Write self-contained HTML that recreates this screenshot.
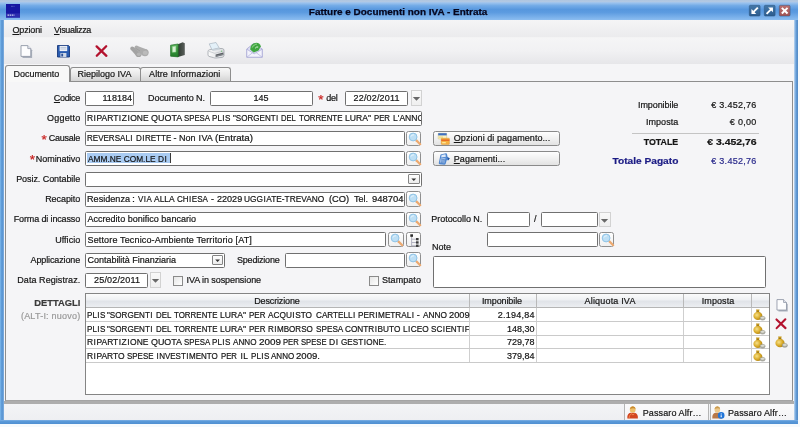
<!DOCTYPE html>
<html><head><meta charset="utf-8"><title>Fatture e Documenti non IVA - Entrata</title>
<style>
*{box-sizing:border-box;margin:0;padding:0}
html,body{width:800px;height:427px;overflow:hidden;background:#f6fafd}
body{will-change:transform;font-family:"Liberation Sans",sans-serif;font-size:9px;color:#151515;position:relative}
.a{position:absolute;white-space:nowrap}
.t{line-height:10px;-webkit-text-stroke:0.2px}
#title{left:0;top:0;width:798px;height:20px;background:linear-gradient(#afc5df 0,#b2c9e4 9%,#9cc3ee 14%,#73abe7 28%,#5797de 48%,#5c9be0 62%,#79b0ea 85%,#8cbdf0 100%)}
#frameL{left:0;top:2px;width:4.8px;height:421px;background:linear-gradient(90deg,#7fbbee 0,#609cd8 28%,#5b95d2 62%,#a4c6ea 84%,#c6daf0 100%)}
#frameR{left:793.8px;top:2px;width:4.4px;height:422px;background:linear-gradient(90deg,#c4dcf2 0,#8cb7e4 25%,#6099d4 60%,#588fca 85%,#4f86bc 100%)}
#frameB{left:0;top:419.7px;width:798px;height:4px;background:linear-gradient(#7fb1e6,#5a99d8 35%,#4f8fd2)}
#menu{left:4px;top:19.5px;width:790px;height:18.5px;background:linear-gradient(#f5f5f6,#ebebed);border-bottom:1px solid #f3f3f4}
#tool{left:4px;top:38px;width:790px;height:25.5px;background:linear-gradient(#f5f5f6,#f1f1f3 50%,#e6e6e9)}
#content{left:4px;top:63.5px;width:790px;height:340px;background:#f5f5f7}
#panel{left:5px;top:81px;width:788px;height:319.8px;border:1px solid #8e8e8e;border-bottom-color:#a4a4a4;background:#f5f5f7}
.tab{border:1px solid #8e8e8e;border-bottom:none;border-radius:3px 3px 0 0;background:linear-gradient(#f8f8f8,#e9e9e9 50%,#d4d4d4)}
.tab.sel{background:#f8f8f8}
.f{border:1px solid #707070;background:#fff;border-radius:1.5px}
.btn{border:1px solid #8a8a8a;border-radius:2.5px;background:linear-gradient(#fefefe,#f1f1f1 50%,#e2e2e2)}
.ib{border:1px solid #8f8f8f;border-radius:2.5px;background:linear-gradient(#fefefe,#f0f0f0)}
.chk{border:1px solid #8a8a8a;background:linear-gradient(135deg,#e6e6e6,#fff)}
.red{color:#c21a1a}
u{text-decoration:underline;text-underline-offset:1px}
#status{left:4px;top:401px;width:790px;height:18.8px;background:linear-gradient(#f3f4f6,#eeeff2);border-top:3.4px solid #adadad}
.hl{background:#a9c8ef}
svg{position:absolute;overflow:visible}
.cb{border:1px solid #858585;border-radius:1px;background:linear-gradient(#fff,#ececec)}
.db{border:1px solid #d2d2d2;background:linear-gradient(#f9f9f9,#efefef)}
i{font-style:normal;padding:0 0.5px}
</style></head><body>
<div class="a" id="frameL"></div><div class="a" id="frameR"></div><div class="a" id="frameB"></div>
<div class="a" id="title"></div>
<div class="a" id="menu"></div><div class="a" id="tool"></div><div class="a" id="content"></div>
<div class="a" id="panel"></div><div class="a" id="status"></div>
<div class="a tab sel" style="left:5px;top:65px;width:65px;height:17px;"></div>
<div class="a tab" style="left:69.5px;top:67px;width:71.0px;height:14px;"></div>
<div class="a tab" style="left:140px;top:67px;width:91px;height:14px;"></div>
<div class="a f" style="left:85px;top:90.5px;width:49px;height:15.0px;"></div>
<div class="a f" style="left:210px;top:90.5px;width:102.5px;height:15.0px;"></div>
<div class="a f" style="left:345px;top:90.5px;width:63.25px;height:15.0px;"></div>
<div class="a db" style="left:410.5px;top:90.0px;width:11.0px;height:15.5px;"><svg style="left:0;top:0" width="11" height="15.5"><path d="M0.80 6.05h7.4l-3.70 3.8z" fill="#686868"/></svg></div>
<div class="a f" style="left:85px;top:110.75px;width:336.5px;height:15.0px;"></div>
<div class="a f" style="left:85px;top:131.0px;width:319.5px;height:15.0px;"></div>
<div class="a ib" style="left:406.1px;top:130.7px;width:15.4px;height:15.3px;"><svg style="left:0.6px;top:0.1px" width="14" height="14" viewBox="0 0 14 14"><line x1="8.4" y1="8.4" x2="12.2" y2="12.2" stroke="#eca970" stroke-width="2.2" stroke-linecap="round"/><circle cx="5.1" cy="5" r="3.9" fill="#bddff5" stroke="#8fc3e6" stroke-width="1"/><path d="M3 4.6A2.6 2.6 0 0 1 6 2.8" stroke="#e8f5fd" stroke-width="1" fill="none"/></svg></div>
<div class="a f" style="left:85px;top:151.25px;width:319.5px;height:15.0px;"></div>
<div class="a ib" style="left:406.1px;top:150.95px;width:15.4px;height:15.3px;"><svg style="left:0.6px;top:0.1px" width="14" height="14" viewBox="0 0 14 14"><line x1="8.4" y1="8.4" x2="12.2" y2="12.2" stroke="#eca970" stroke-width="2.2" stroke-linecap="round"/><circle cx="5.1" cy="5" r="3.9" fill="#bddff5" stroke="#8fc3e6" stroke-width="1"/><path d="M3 4.6A2.6 2.6 0 0 1 6 2.8" stroke="#e8f5fd" stroke-width="1" fill="none"/></svg></div>
<div class="a f" style="left:85px;top:171.5px;width:336.5px;height:15.0px;"></div>
<div class="a cb" style="left:408.2px;top:173.8px;width:11.6px;height:10.5px;"><svg style="left:0;top:0" width="11.6" height="10.5"><path d="M2.40 3.50h4.8l-2.40 2.5z" fill="#333"/></svg></div>
<div class="a f" style="left:85px;top:191.75px;width:319.5px;height:15.0px;"></div>
<div class="a ib" style="left:406.1px;top:191.45px;width:15.4px;height:15.3px;"><svg style="left:0.6px;top:0.1px" width="14" height="14" viewBox="0 0 14 14"><line x1="8.4" y1="8.4" x2="12.2" y2="12.2" stroke="#eca970" stroke-width="2.2" stroke-linecap="round"/><circle cx="5.1" cy="5" r="3.9" fill="#bddff5" stroke="#8fc3e6" stroke-width="1"/><path d="M3 4.6A2.6 2.6 0 0 1 6 2.8" stroke="#e8f5fd" stroke-width="1" fill="none"/></svg></div>
<div class="a f" style="left:85px;top:212.0px;width:319.5px;height:15.0px;"></div>
<div class="a ib" style="left:406.1px;top:211.7px;width:15.4px;height:15.3px;"><svg style="left:0.6px;top:0.1px" width="14" height="14" viewBox="0 0 14 14"><line x1="8.4" y1="8.4" x2="12.2" y2="12.2" stroke="#eca970" stroke-width="2.2" stroke-linecap="round"/><circle cx="5.1" cy="5" r="3.9" fill="#bddff5" stroke="#8fc3e6" stroke-width="1"/><path d="M3 4.6A2.6 2.6 0 0 1 6 2.8" stroke="#e8f5fd" stroke-width="1" fill="none"/></svg></div>
<div class="a f" style="left:85px;top:232.25px;width:301.25px;height:15.0px;"></div>
<div class="a ib" style="left:388.3px;top:231.95px;width:15.45px;height:15.3px;"><svg style="left:0.6px;top:0.1px" width="14" height="14" viewBox="0 0 14 14"><line x1="8.4" y1="8.4" x2="12.2" y2="12.2" stroke="#eca970" stroke-width="2.2" stroke-linecap="round"/><circle cx="5.1" cy="5" r="3.9" fill="#bddff5" stroke="#8fc3e6" stroke-width="1"/><path d="M3 4.6A2.6 2.6 0 0 1 6 2.8" stroke="#e8f5fd" stroke-width="1" fill="none"/></svg></div>
<div class="a ib" style="left:406.1px;top:231.95px;width:15.4px;height:15.3px;"><svg style="left:0;top:0" width="15" height="15" viewBox="0 0 15 15"><path d="M4.6 3v10.2M4.6 6.2h5M4.6 9.5h5M4.6 12.8h5" stroke="#b4b4c2" stroke-width="1" fill="none"/><rect x="3.3" y="1.3" width="2.7" height="2.5" fill="#2d2d2d"/><rect x="9" y="5" width="2.6" height="2.3" fill="#3a3a3a"/><rect x="9" y="8.3" width="2.6" height="2.3" fill="#3a3a3a"/><rect x="9" y="11.6" width="2.6" height="2.3" fill="#3a3a3a"/></svg></div>
<div class="a f" style="left:85px;top:252.5px;width:140px;height:15.0px;"></div>
<div class="a cb" style="left:212.2px;top:254.8px;width:11.2px;height:10.5px;"><svg style="left:0;top:0" width="11.2" height="10.5"><path d="M2.20 3.50h4.8l-2.40 2.5z" fill="#333"/></svg></div>
<div class="a f" style="left:85px;top:272.75px;width:62.5px;height:15.0px;"></div>
<div class="a " style="left:87.2px;top:153.2px;width:83.0px;height:10.2px;background:#a9cbf2"></div>
<div class="a " style="left:170.2px;top:153.2px;width:1.0px;height:10.2px;background:#3a3a3a"></div>
<div class="a db" style="left:149.5px;top:272.25px;width:11.0px;height:15.5px;"><svg style="left:0;top:0" width="11" height="15.5"><path d="M0.80 6.05h7.4l-3.70 3.8z" fill="#686868"/></svg></div>
<div class="a chk" style="left:173px;top:275.5px;width:10px;height:10.0px;"></div>
<div class="a chk" style="left:368.5px;top:275.5px;width:10.0px;height:10.0px;"></div>
<div class="a f" style="left:284.5px;top:252.5px;width:120.0px;height:15.0px;"></div>
<div class="a ib" style="left:406.1px;top:252.2px;width:15.4px;height:15.3px;"><svg style="left:0.6px;top:0.1px" width="14" height="14" viewBox="0 0 14 14"><line x1="8.4" y1="8.4" x2="12.2" y2="12.2" stroke="#eca970" stroke-width="2.2" stroke-linecap="round"/><circle cx="5.1" cy="5" r="3.9" fill="#bddff5" stroke="#8fc3e6" stroke-width="1"/><path d="M3 4.6A2.6 2.6 0 0 1 6 2.8" stroke="#e8f5fd" stroke-width="1" fill="none"/></svg></div>
<div class="a f" style="left:487px;top:212.0px;width:42.5px;height:15.0px;"></div>
<div class="a f" style="left:541px;top:212.0px;width:57px;height:15.0px;"></div>
<div class="a db" style="left:599.25px;top:211.5px;width:11.25px;height:15.5px;"><svg style="left:0;top:0" width="11" height="15.5"><path d="M0.80 6.05h7.4l-3.70 3.8z" fill="#686868"/></svg></div>
<div class="a f" style="left:487px;top:232.25px;width:110.5px;height:15.0px;"></div>
<div class="a ib" style="left:599.25px;top:231.95px;width:14.75px;height:15.3px;"><svg style="left:0.6px;top:0.1px" width="14" height="14" viewBox="0 0 14 14"><line x1="8.4" y1="8.4" x2="12.2" y2="12.2" stroke="#eca970" stroke-width="2.2" stroke-linecap="round"/><circle cx="5.1" cy="5" r="3.9" fill="#bddff5" stroke="#8fc3e6" stroke-width="1"/><path d="M3 4.6A2.6 2.6 0 0 1 6 2.8" stroke="#e8f5fd" stroke-width="1" fill="none"/></svg></div>
<div class="a f" style="left:433px;top:256px;width:333px;height:31.5px;"></div>
<div class="a btn" style="left:433px;top:130.75px;width:126.5px;height:15.5px;"></div>
<div class="a btn" style="left:433px;top:151.25px;width:126.5px;height:15.0px;"></div>
<div class="a " style="left:632px;top:133px;width:127px;height:1px;background:#c4c4c4"></div>
<div class="a f" style="left:85px;top:293.2px;width:684.5px;height:102.3px;border-color:#848484;border-radius:0"></div>
<div class="a " style="left:86px;top:294.2px;width:682.5px;height:14.0px;background:linear-gradient(#fbfbfb,#eef0f3 45%,#e0e3e8 55%,#eceef1);border-bottom:1px solid #b5b5b5"></div>
<div class="a " style="left:468.75px;top:294.2px;width:1.0px;height:13.8px;background:#b9b9b9"></div>
<div class="a " style="left:468.75px;top:308px;width:1.0px;height:54.5px;background:#cfcfcf"></div>
<div class="a " style="left:536.0px;top:294.2px;width:1.0px;height:13.8px;background:#b9b9b9"></div>
<div class="a " style="left:536.0px;top:308px;width:1.0px;height:54.5px;background:#cfcfcf"></div>
<div class="a " style="left:683.25px;top:294.2px;width:1.0px;height:13.8px;background:#b9b9b9"></div>
<div class="a " style="left:683.25px;top:308px;width:1.0px;height:54.5px;background:#cfcfcf"></div>
<div class="a " style="left:751.4px;top:294.2px;width:1.0px;height:13.8px;background:#b9b9b9"></div>
<div class="a " style="left:751.4px;top:308px;width:1.0px;height:54.5px;background:#cfcfcf"></div>
<div class="a " style="left:86px;top:321.28px;width:682.5px;height:1.0px;background:#cacaca"></div>
<div class="a " style="left:86px;top:334.86px;width:682.5px;height:1.0px;background:#cacaca"></div>
<div class="a " style="left:86px;top:348.44px;width:682.5px;height:1.0px;background:#cacaca"></div>
<div class="a " style="left:86px;top:362.02px;width:682.5px;height:1.0px;background:#cacaca"></div>
<div class="a " style="left:624px;top:404.4px;width:84.5px;height:15.4px;background:linear-gradient(#fafafb,#f3f3f5);border-left:1px solid #b4b4b4;border-right:1px solid #b4b4b4"></div>
<div class="a " style="left:710px;top:404.4px;width:84px;height:15.4px;background:linear-gradient(#fafafb,#f3f3f5);border-left:1px solid #b4b4b4"></div>
<div class="a t" style="top:6.77px;font-size:9.6px;left:247.60000000000002px;width:300px;text-align:center;font-weight:bold;color:#06061e;-webkit-text-stroke:0.25px #06061e"><span style="display:inline-block;transform:scaleX(1.0368);transform-origin:center center">Fatture e Documenti non IVA - Entrata</span></div>
<div class="a t" style="top:25.18px;font-size:9.0px;letter-spacing:-0.133px;left:12.4px;"><span><u>O</u>pzioni</span></div>
<div class="a t" style="top:25.18px;font-size:9.0px;letter-spacing:-0.336px;left:54px;"><span><u>V</u>isualizza</span></div>
<div class="a t" style="top:69.38px;font-size:9.0px;letter-spacing:-0.037px;left:-113.6px;width:300px;text-align:center;text-indent:-0.037px;"><span>Documento</span></div>
<div class="a t" style="top:69.38px;font-size:9.0px;letter-spacing:0.010px;left:-45.599999999999994px;width:300px;text-align:center;text-indent:0.010px;"><span>Riepilogo IVA</span></div>
<div class="a t" style="top:69.38px;font-size:9.0px;letter-spacing:0.070px;left:34.69999999999999px;width:300px;text-align:center;text-indent:0.070px;"><span>Altre Informazioni</span></div>
<div class="a t" style="top:92.98px;font-size:9.0px;letter-spacing:-0.336px;right:719.80px;margin-right:0.336px;"><span><u>C</u>odice</span></div>
<div class="a t" style="top:92.98px;font-size:9.0px;letter-spacing:0.021px;right:668.00px;margin-right:-0.021px;"><span>118184</span></div>
<div class="a t" style="top:92.98px;font-size:9.0px;letter-spacing:-0.044px;left:148px;"><span>Documento N.</span></div>
<div class="a t" style="top:92.98px;font-size:9.0px;left:111px;width:300px;text-align:center;"><span>145</span></div>
<div class="a t" style="top:94.52px;font-size:13.5px;left:318.29999999999995px;color:#c8201e"><span>*</span></div>
<div class="a t" style="top:92.98px;font-size:9.0px;letter-spacing:-0.239px;left:326.2px;"><span>del</span></div>
<div class="a t" style="top:92.98px;font-size:9.0px;letter-spacing:0.161px;left:226.5px;width:300px;text-align:center;text-indent:0.161px;"><span>22/02/2011</span></div>
<div class="a t" style="top:113.23px;font-size:9.0px;letter-spacing:0.181px;right:719.80px;margin-right:-0.181px;"><span>Oggetto</span></div>
<div class="a t" style="top:113.23px;font-size:9.0px;left:86.8px;word-spacing:0px;"><span style="display:inline-block;transform:scaleX(0.9456);transform-origin:left center">R<i>I</i>PART<i>I</i>Z<i>I</i>ONE</span></div>
<div class="a t" style="top:113.23px;font-size:9.0px;left:150.60000000000002px;word-spacing:0px;"><span style="display:inline-block;transform:scaleX(0.9954);transform-origin:left center">QUOTA</span></div>
<div class="a t" style="top:113.23px;font-size:9.0px;left:183.70000000000002px;word-spacing:0px;"><span style="display:inline-block;transform:scaleX(0.8662);transform-origin:left center">SPESA</span></div>
<div class="a t" style="top:113.23px;font-size:9.0px;left:211.8px;word-spacing:0px;"><span style="display:inline-block;transform:scaleX(0.9004);transform-origin:left center">PL<i>I</i>S</span></div>
<div class="a t" style="top:113.23px;font-size:9.0px;left:232.5px;word-spacing:0px;"><span style="display:inline-block;transform:scaleX(0.8942);transform-origin:left center">"SORGENT<i>I</i></span></div>
<div class="a t" style="top:113.23px;font-size:9.0px;left:281.0px;word-spacing:0px;"><span style="display:inline-block;transform:scaleX(0.8450);transform-origin:left center">DEL</span></div>
<div class="a t" style="top:113.23px;font-size:9.0px;left:298.5px;word-spacing:0px;"><span style="display:inline-block;transform:scaleX(0.8816);transform-origin:left center">TORRENTE</span></div>
<div class="a t" style="top:113.23px;font-size:9.0px;left:344.8px;word-spacing:0px;"><span style="display:inline-block;transform:scaleX(0.9558);transform-origin:left center">LURA"</span></div>
<div class="a t" style="top:113.23px;font-size:9.0px;left:374.3px;word-spacing:0px;"><span style="display:inline-block;transform:scaleX(0.8641);transform-origin:left center">PER</span></div>
<div class="a t" style="top:113.23px;font-size:9.0px;left:392.5px;word-spacing:0px;width:28.0px;overflow:hidden;"><span style="display:inline-block;transform:scaleX(0.9520);transform-origin:left center">L'ANNO 2009</span></div>
<div class="a t" style="top:135.02px;font-size:13.5px;left:41.5px;color:#c8201e"><span>*</span></div>
<div class="a t" style="top:133.48px;font-size:9.0px;letter-spacing:-0.247px;right:719.80px;margin-right:0.247px;"><span>Causale</span></div>
<div class="a t" style="top:133.48px;font-size:9.0px;left:86.8px;word-spacing:0px;"><span style="display:inline-block;transform:scaleX(0.8924);transform-origin:left center">REVERSAL<i>I</i></span></div>
<div class="a t" style="top:133.48px;font-size:9.0px;left:135.5px;word-spacing:0px;"><span style="display:inline-block;transform:scaleX(0.8930);transform-origin:left center">D<i>I</i>RETTE</span></div>
<div class="a t" style="top:133.48px;font-size:9.0px;left:173.39999999999998px;"><span>-</span></div>
<div class="a t" style="top:133.48px;font-size:9.0px;left:179.3px;word-spacing:0px;"><span style="display:inline-block;transform:scaleX(0.9991);transform-origin:left center">Non</span></div>
<div class="a t" style="top:133.48px;font-size:9.0px;left:198.0px;word-spacing:0px;"><span style="display:inline-block;transform:scaleX(0.9960);transform-origin:left center"><i>I</i>VA</span></div>
<div class="a t" style="top:133.48px;font-size:9.0px;left:214.8px;word-spacing:0px;"><span style="display:inline-block;transform:scaleX(1.0852);transform-origin:left center">(Entrata)</span></div>
<div class="a t" style="top:155.22px;font-size:13.5px;left:29.799999999999997px;color:#c8201e"><span>*</span></div>
<div class="a t" style="top:153.73px;font-size:9.0px;letter-spacing:-0.073px;right:719.80px;margin-right:0.073px;"><span>Nominativo</span></div>
<div class="a t" style="top:173.98px;font-size:9.0px;letter-spacing:-0.065px;right:719.80px;margin-right:0.065px;"><span>Posiz. Contabile</span></div>
<div class="a t" style="top:194.23px;font-size:9.0px;letter-spacing:-0.066px;right:719.80px;margin-right:0.066px;"><span>Recapito</span></div>
<div class="a t" style="top:214.48px;font-size:9.0px;letter-spacing:-0.139px;right:719.80px;margin-right:0.139px;"><span>Forma di incasso</span></div>
<div class="a t" style="top:234.73px;font-size:9.0px;letter-spacing:0.022px;right:719.80px;margin-right:-0.022px;"><span>Ufficio</span></div>
<div class="a t" style="top:254.98px;font-size:9.0px;letter-spacing:-0.129px;right:719.80px;margin-right:0.129px;"><span>Applicazione</span></div>
<div class="a t" style="top:275.23px;font-size:9.0px;letter-spacing:0.065px;right:719.80px;margin-right:-0.065px;"><span>Data Registraz.</span></div>
<div class="a t" style="top:153.73px;font-size:9.0px;left:87.8px;word-spacing:0px;"><span style="display:inline-block;transform:scaleX(0.9260);transform-origin:left center">AMM.NE COM.LE D<i>I</i></span></div>
<div class="a t" style="top:194.23px;font-size:9.0px;left:87.3px;word-spacing:0px;"><span style="display:inline-block;transform:scaleX(1.0110);transform-origin:left center">Residenza</span></div>
<div class="a t" style="top:194.23px;font-size:9.0px;left:132.3px;word-spacing:0px;"><span style="display:inline-block;transform:scaleX(1.1925);transform-origin:left center">:</span></div>
<div class="a t" style="top:194.23px;font-size:9.0px;left:137.5px;word-spacing:0px;"><span style="display:inline-block;transform:scaleX(0.8876);transform-origin:left center">V<i>I</i>A</span></div>
<div class="a t" style="top:194.23px;font-size:9.0px;left:153.8px;word-spacing:0px;"><span style="display:inline-block;transform:scaleX(0.9396);transform-origin:left center">ALLA</span></div>
<div class="a t" style="top:194.23px;font-size:9.0px;left:177.3px;word-spacing:0px;"><span style="display:inline-block;transform:scaleX(0.8977);transform-origin:left center">CH<i>I</i>ESA</span></div>
<div class="a t" style="top:194.23px;font-size:9.0px;left:210.89999999999998px;"><span>-</span></div>
<div class="a t" style="top:194.23px;font-size:9.0px;left:216.8px;word-spacing:0px;"><span style="display:inline-block;transform:scaleX(1.0067);transform-origin:left center">22029</span></div>
<div class="a t" style="top:194.23px;font-size:9.0px;left:244.3px;word-spacing:0px;"><span style="display:inline-block;transform:scaleX(0.9250);transform-origin:left center">UGG<i>I</i>ATE-TREVANO</span></div>
<div class="a t" style="top:194.23px;font-size:9.0px;left:329.3px;word-spacing:0px;"><span style="display:inline-block;transform:scaleX(1.0359);transform-origin:left center">(CO)</span></div>
<div class="a t" style="top:194.23px;font-size:9.0px;left:354.3px;word-spacing:0px;"><span style="display:inline-block;transform:scaleX(0.9989);transform-origin:left center">Tel.</span></div>
<div class="a t" style="top:194.23px;font-size:9.0px;left:371.8px;word-spacing:0px;"><span style="display:inline-block;transform:scaleX(1.0484);transform-origin:left center">948704</span></div>
<div class="a t" style="top:214.48px;font-size:9.0px;letter-spacing:0.016px;left:87.5px;"><span>Accredito bonifico bancario</span></div>
<div class="a t" style="top:234.73px;font-size:9.0px;letter-spacing:0.148px;left:87.5px;"><span>Settore Tecnico-Ambiente Territorio [AT]</span></div>
<div class="a t" style="top:254.98px;font-size:9.0px;letter-spacing:-0.024px;left:87.5px;"><span>Contabilità Finanziaria</span></div>
<div class="a t" style="top:275.23px;font-size:9.0px;letter-spacing:0.161px;left:-33px;width:300px;text-align:center;text-indent:0.161px;"><span>25/02/2011</span></div>
<div class="a t" style="top:275.23px;font-size:9.0px;letter-spacing:-0.077px;left:186.5px;"><span>IVA in sospensione</span></div>
<div class="a t" style="top:275.23px;font-size:9.0px;letter-spacing:0.059px;left:382px;"><span>Stampato</span></div>
<div class="a t" style="top:254.98px;font-size:9.0px;letter-spacing:-0.205px;left:237px;"><span>Spedizione</span></div>
<div class="a t" style="top:214.48px;font-size:9.0px;letter-spacing:-0.041px;left:431.3px;"><span>Protocollo N.</span></div>
<div class="a t" style="top:214.48px;font-size:9.0px;left:534px;"><span>/</span></div>
<div class="a t" style="top:242.28px;font-size:9.0px;letter-spacing:-0.004px;left:432px;"><span>Note</span></div>
<div class="a t" style="top:133.48px;font-size:9.0px;letter-spacing:0.062px;left:453.75px;"><span><u>O</u>pzioni di pagamento...</span></div>
<div class="a t" style="top:153.73px;font-size:9.0px;letter-spacing:0.079px;left:453.75px;"><span><u>P</u>agamenti...</span></div>
<div class="a t" style="top:99.88px;font-size:9.0px;letter-spacing:-0.073px;right:121.70px;margin-right:0.073px;"><span>Imponibile</span></div>
<div class="a t" style="top:99.88px;font-size:9.0px;letter-spacing:0.275px;right:43.70px;margin-right:-0.275px;"><span>€ 3.452,76</span></div>
<div class="a t" style="top:116.88px;font-size:9.0px;letter-spacing:0.069px;right:121.70px;margin-right:-0.069px;"><span>Imposta</span></div>
<div class="a t" style="top:116.88px;font-size:9.0px;letter-spacing:0.295px;right:43.70px;margin-right:-0.295px;"><span>€ 0,00</span></div>
<div class="a t" style="top:136.88px;font-size:9.0px;right:121.70px;font-weight:bold"><span style="display:inline-block;transform:scaleX(0.9809);transform-origin:right center">TOTALE</span></div>
<div class="a t" style="top:136.88px;font-size:9.0px;right:43.70px;font-weight:bold"><span style="display:inline-block;transform:scaleX(1.1587);transform-origin:right center">€ 3.452,76</span></div>
<div class="a t" style="top:155.68px;font-size:9.0px;right:121.70px;font-weight:bold;color:#1b1b84"><span style="display:inline-block;transform:scaleX(1.1278);transform-origin:right center">Totale Pagato</span></div>
<div class="a t" style="top:155.68px;font-size:9.0px;letter-spacing:0.275px;right:43.70px;margin-right:-0.275px;color:#2a2a8c"><span>€ 3.452,76</span></div>
<div class="a t" style="top:297.68px;font-size:9.0px;right:719.80px;font-weight:bold;color:#3a3a3a"><span style="display:inline-block;transform:scaleX(1.0377);transform-origin:right center">DETTAGLI</span></div>
<div class="a t" style="top:311.38px;font-size:9.0px;letter-spacing:0.224px;right:719.80px;margin-right:-0.224px;color:#9a9a9a"><span>(ALT-I: nuovo)</span></div>
<div class="a t" style="top:296.38px;font-size:9.0px;letter-spacing:-0.139px;left:127px;width:300px;text-align:center;text-indent:-0.139px;"><span>Descrizione</span></div>
<div class="a t" style="top:296.38px;font-size:9.0px;letter-spacing:-0.103px;left:352px;width:300px;text-align:center;text-indent:-0.103px;"><span>Imponibile</span></div>
<div class="a t" style="top:296.38px;font-size:9.0px;letter-spacing:0.177px;left:460px;width:300px;text-align:center;text-indent:0.177px;"><span>Aliquota IVA</span></div>
<div class="a t" style="top:296.38px;font-size:9.0px;letter-spacing:0.069px;left:568px;width:300px;text-align:center;text-indent:0.069px;"><span>Imposta</span></div>
<div class="a t" style="top:310.18px;font-size:9.0px;left:86.8px;word-spacing:0px;"><span style="display:inline-block;transform:scaleX(0.9004);transform-origin:left center">PL<i>I</i>S</span></div>
<div class="a t" style="top:310.18px;font-size:9.0px;left:106.8px;word-spacing:0px;"><span style="display:inline-block;transform:scaleX(0.8981);transform-origin:left center">"SORGENT<i>I</i></span></div>
<div class="a t" style="top:310.18px;font-size:9.0px;left:155.5px;word-spacing:0px;"><span style="display:inline-block;transform:scaleX(0.8735);transform-origin:left center">DEL</span></div>
<div class="a t" style="top:310.18px;font-size:9.0px;left:173.5px;word-spacing:0px;"><span style="display:inline-block;transform:scaleX(0.8816);transform-origin:left center">TORRENTE</span></div>
<div class="a t" style="top:310.18px;font-size:9.0px;left:219.8px;word-spacing:0px;"><span style="display:inline-block;transform:scaleX(0.9558);transform-origin:left center">LURA"</span></div>
<div class="a t" style="top:310.18px;font-size:9.0px;left:249.3px;word-spacing:0px;"><span style="display:inline-block;transform:scaleX(0.8911);transform-origin:left center">PER</span></div>
<div class="a t" style="top:310.18px;font-size:9.0px;left:268.0px;word-spacing:0px;"><span style="display:inline-block;transform:scaleX(0.9191);transform-origin:left center">ACQU<i>I</i>STO</span></div>
<div class="a t" style="top:310.18px;font-size:9.0px;left:315.5px;word-spacing:0px;"><span style="display:inline-block;transform:scaleX(0.9071);transform-origin:left center">CARTELL<i>I</i></span></div>
<div class="a t" style="top:310.18px;font-size:9.0px;left:357.5px;word-spacing:0px;"><span style="display:inline-block;transform:scaleX(0.9104);transform-origin:left center">PER<i>I</i>METRAL<i>I</i></span></div>
<div class="a t" style="top:310.18px;font-size:9.0px;left:416.7px;"><span>-</span></div>
<div class="a t" style="top:310.18px;font-size:9.0px;left:422.5px;word-spacing:0px;"><span style="display:inline-block;transform:scaleX(0.9225);transform-origin:left center">ANNO</span></div>
<div class="a t" style="top:310.18px;font-size:9.0px;left:448.8px;word-spacing:0px;"><span style="display:inline-block;transform:scaleX(1.0334);transform-origin:left center">2009</span></div>
<div class="a t" style="top:310.18px;font-size:9.0px;letter-spacing:0.244px;right:265.50px;margin-right:-0.244px;"><span>2.194,84</span></div>
<div class="a t" style="top:323.80px;font-size:9.0px;left:86.8px;word-spacing:0px;"><span style="display:inline-block;transform:scaleX(0.9004);transform-origin:left center">PL<i>I</i>S</span></div>
<div class="a t" style="top:323.80px;font-size:9.0px;left:106.8px;word-spacing:0px;"><span style="display:inline-block;transform:scaleX(0.8981);transform-origin:left center">"SORGENT<i>I</i></span></div>
<div class="a t" style="top:323.80px;font-size:9.0px;left:155.5px;word-spacing:0px;"><span style="display:inline-block;transform:scaleX(0.8735);transform-origin:left center">DEL</span></div>
<div class="a t" style="top:323.80px;font-size:9.0px;left:173.5px;word-spacing:0px;"><span style="display:inline-block;transform:scaleX(0.8816);transform-origin:left center">TORRENTE</span></div>
<div class="a t" style="top:323.80px;font-size:9.0px;left:219.8px;word-spacing:0px;"><span style="display:inline-block;transform:scaleX(0.9558);transform-origin:left center">LURA"</span></div>
<div class="a t" style="top:323.80px;font-size:9.0px;left:249.3px;word-spacing:0px;"><span style="display:inline-block;transform:scaleX(0.8911);transform-origin:left center">PER</span></div>
<div class="a t" style="top:323.80px;font-size:9.0px;left:268.0px;word-spacing:0px;"><span style="display:inline-block;transform:scaleX(0.8954);transform-origin:left center">R<i>I</i>MBORSO</span></div>
<div class="a t" style="top:323.80px;font-size:9.0px;left:315.5px;word-spacing:0px;"><span style="display:inline-block;transform:scaleX(0.9095);transform-origin:left center">SPESA</span></div>
<div class="a t" style="top:323.80px;font-size:9.0px;left:345.0px;word-spacing:0px;"><span style="display:inline-block;transform:scaleX(0.9162);transform-origin:left center">CONTR<i>I</i>BUTO</span></div>
<div class="a t" style="top:323.80px;font-size:9.0px;left:402.5px;word-spacing:0px;"><span style="display:inline-block;transform:scaleX(0.9199);transform-origin:left center">L<i>I</i>CEO</span></div>
<div class="a t" style="top:323.80px;font-size:9.0px;left:430.5px;word-spacing:0px;width:38.2px;overflow:hidden;"><span style="display:inline-block;transform:scaleX(0.9013);transform-origin:left center">SC<i>I</i>ENT<i>I</i>F<i>I</i>CO</span></div>
<div class="a t" style="top:323.80px;font-size:9.0px;letter-spacing:-0.005px;right:265.50px;margin-right:0.005px;"><span>148,30</span></div>
<div class="a t" style="top:337.42px;font-size:9.0px;left:86.8px;word-spacing:0px;"><span style="display:inline-block;transform:scaleX(0.9425);transform-origin:left center">R<i>I</i>PART<i>I</i>Z<i>I</i>ONE</span></div>
<div class="a t" style="top:337.42px;font-size:9.0px;left:150.5px;word-spacing:0px;"><span style="display:inline-block;transform:scaleX(0.9890);transform-origin:left center">QUOTA</span></div>
<div class="a t" style="top:337.42px;font-size:9.0px;left:183.8px;word-spacing:0px;"><span style="display:inline-block;transform:scaleX(0.8729);transform-origin:left center">SPESA</span></div>
<div class="a t" style="top:337.42px;font-size:9.0px;left:212.3px;word-spacing:0px;"><span style="display:inline-block;transform:scaleX(0.9004);transform-origin:left center">PL<i>I</i>S</span></div>
<div class="a t" style="top:337.42px;font-size:9.0px;left:233.0px;word-spacing:0px;"><span style="display:inline-block;transform:scaleX(0.9033);transform-origin:left center">ANNO</span></div>
<div class="a t" style="top:337.42px;font-size:9.0px;left:258.8px;word-spacing:0px;"><span style="display:inline-block;transform:scaleX(1.0983);transform-origin:left center">2009</span></div>
<div class="a t" style="top:337.42px;font-size:9.0px;left:283.0px;word-spacing:0px;"><span style="display:inline-block;transform:scaleX(0.8533);transform-origin:left center">PER</span></div>
<div class="a t" style="top:337.42px;font-size:9.0px;left:301.0px;word-spacing:0px;"><span style="display:inline-block;transform:scaleX(0.8496);transform-origin:left center">SPESE</span></div>
<div class="a t" style="top:337.42px;font-size:9.0px;left:328.8px;word-spacing:0px;"><span style="display:inline-block;transform:scaleX(0.9485);transform-origin:left center">D<i>I</i></span></div>
<div class="a t" style="top:337.42px;font-size:9.0px;left:340.5px;word-spacing:0px;"><span style="display:inline-block;transform:scaleX(0.9052);transform-origin:left center">GEST<i>I</i>ONE.</span></div>
<div class="a t" style="top:337.42px;font-size:9.0px;letter-spacing:-0.005px;right:265.50px;margin-right:0.005px;"><span>729,78</span></div>
<div class="a t" style="top:351.04px;font-size:9.0px;left:86.8px;word-spacing:0px;"><span style="display:inline-block;transform:scaleX(0.9418);transform-origin:left center">R<i>I</i>PARTO</span></div>
<div class="a t" style="top:351.04px;font-size:9.0px;left:126.8px;word-spacing:0px;"><span style="display:inline-block;transform:scaleX(0.8829);transform-origin:left center">SPESE</span></div>
<div class="a t" style="top:351.04px;font-size:9.0px;left:156.0px;word-spacing:0px;"><span style="display:inline-block;transform:scaleX(0.8906);transform-origin:left center"><i>I</i>NVEST<i>I</i>MENTO</span></div>
<div class="a t" style="top:351.04px;font-size:9.0px;left:220.5px;word-spacing:0px;"><span style="display:inline-block;transform:scaleX(0.8641);transform-origin:left center">PER</span></div>
<div class="a t" style="top:351.04px;font-size:9.0px;left:239.8px;word-spacing:0px;"><span style="display:inline-block;transform:scaleX(0.9377);transform-origin:left center"><i>I</i>L</span></div>
<div class="a t" style="top:351.04px;font-size:9.0px;left:250.5px;word-spacing:0px;"><span style="display:inline-block;transform:scaleX(0.9004);transform-origin:left center">PL<i>I</i>S</span></div>
<div class="a t" style="top:351.04px;font-size:9.0px;left:271.3px;word-spacing:0px;"><span style="display:inline-block;transform:scaleX(0.8918);transform-origin:left center">ANNO</span></div>
<div class="a t" style="top:351.04px;font-size:9.0px;left:296.3px;word-spacing:0px;"><span style="display:inline-block;transform:scaleX(1.0652);transform-origin:left center">2009.</span></div>
<div class="a t" style="top:351.04px;font-size:9.0px;letter-spacing:-0.005px;right:265.50px;margin-right:0.005px;"><span>379,84</span></div>
<div class="a t" style="top:407.88px;font-size:9.0px;letter-spacing:0.113px;left:642.7px;"><span>Passaro Alfr…</span></div>
<div class="a t" style="top:407.88px;font-size:9.0px;letter-spacing:0.113px;left:728px;"><span>Passaro Alfr…</span></div>
<svg style="left:6px;top:4px" width="14" height="13.5" viewBox="0 0 14 13.5"><rect width="14" height="13.5" fill="#1616a2"/><rect x="0" y="9.3" width="14" height="4.2" fill="#2c2cae"/><path d="M1.5 11.2h7" stroke="#c9d2f2" stroke-width="1.3" stroke-dasharray="1.6 0.6"/><path d="M5 2.3h4" stroke="#6d7bd0" stroke-width="0.8" stroke-dasharray="0.8 0.5"/></svg>
<svg style="left:748.6px;top:4.8px" width="11.4" height="11.4" viewBox="0 0 12 12"><defs><linearGradient id="g748" x1="0" y1="0" x2="0" y2="1"><stop offset="0" stop-color="#4377a8"/><stop offset="1" stop-color="#2c5c8e"/></linearGradient></defs><rect x="0.3" y="0.3" width="11.4" height="11.4" rx="1.2" fill="url(#g748)" stroke="#2a4f78" stroke-opacity="0.6" stroke-width="0.8"/><path d="M9.3 2.7L4 8" stroke="#fff" stroke-width="2" fill="none"/><path d="M2.6 4.3v5.1h5.1z" fill="#fff"/></svg>
<svg style="left:763.7px;top:4.8px" width="11.4" height="11.4" viewBox="0 0 12 12"><defs><linearGradient id="g763" x1="0" y1="0" x2="0" y2="1"><stop offset="0" stop-color="#4377a8"/><stop offset="1" stop-color="#2c5c8e"/></linearGradient></defs><rect x="0.3" y="0.3" width="11.4" height="11.4" rx="1.2" fill="url(#g763)" stroke="#2a4f78" stroke-opacity="0.6" stroke-width="0.8"/><path d="M2.7 9.3L8 4" stroke="#fff" stroke-width="2" fill="none"/><path d="M9.4 7.7V2.6H4.3z" fill="#fff"/></svg>
<svg style="left:778.8px;top:4.8px" width="11.4" height="11.4" viewBox="0 0 12 12"><defs><linearGradient id="g778" x1="0" y1="0" x2="0" y2="1"><stop offset="0" stop-color="#bb7070"/><stop offset="1" stop-color="#a05252"/></linearGradient></defs><rect x="0.3" y="0.3" width="11.4" height="11.4" rx="1.2" fill="url(#g778)" stroke="#2a4f78" stroke-opacity="0.6" stroke-width="0.8"/><path d="M3 3l6 6M9 3l-6 6" stroke="#fff" stroke-width="2.1" fill="none"/></svg>
<svg style="left:19.5px;top:44.7px" width="12.5" height="12.5" viewBox="0 0 12.5 12.5"><path d="M1.6 1.4h6.6l3 3v7.6h-9.6z" fill="#9ea4b2" opacity="0.85" transform="translate(0.9,0.9)"/><path d="M1 0.6h6.8l3 3v7.8H1z" fill="#fdfdfe" stroke="#9097a6" stroke-width="0.9"/><path d="M7.8 0.6v3h3" fill="#e3e6ee" stroke="#9097a6" stroke-width="0.8"/></svg>
<svg style="left:57px;top:44.5px" width="13" height="12.5" viewBox="0 0 13 12.5"><path d="M0.5 0.5h11l1 1v10.5h-12z" fill="#2a5cb0" stroke="#17387c" stroke-width="0.9"/><rect x="2.6" y="0.9" width="7.6" height="5.2" fill="#eef2f8"/><path d="M3.4 2.4h6M3.4 4h6" stroke="#9fb0cc" stroke-width="0.7"/><rect x="3.4" y="8" width="6" height="4" fill="#cfd8e6"/><rect x="4.3" y="8.7" width="1.8" height="2.8" fill="#2a4f96"/></svg>
<svg style="left:95.2px;top:45px" width="13" height="12" viewBox="0 0 13 12"><path d="M1.6 1.4L11.4 10.8M11.2 1.2L1.8 10.8" stroke="#b3122e" stroke-width="2.3" stroke-linecap="round" fill="none"/></svg>
<svg style="left:130px;top:44.5px" width="19.5" height="13" viewBox="0 0 19.5 13"><g fill="#a3a3a3"><circle cx="2.2" cy="3.4" r="1.9"/><circle cx="8.6" cy="9" r="3.1"/><polygon points="0.95,4.83 6.56,11.33 10.64,6.67 3.45,1.97"/></g><g fill="#acacac"><circle cx="6.5" cy="2.6" r="2.0"/><circle cx="15" cy="7.6" r="3.7"/><polygon points="5.49,4.32 13.12,10.79 16.88,4.41 7.51,0.88"/></g><ellipse cx="8.8" cy="9.2" rx="2" ry="1.7" fill="#b6b6b6"/><ellipse cx="15.3" cy="7.9" rx="2.5" ry="2.1" fill="#bbb"/><path d="M5.5 3.2L10 6" stroke="#9a9a9a" stroke-width="0.8"/></svg>
<svg style="left:169.5px;top:42px" width="15" height="15.5" viewBox="0 0 15 15.5"><defs><linearGradient id="gb" x1="0" y1="0" x2="0" y2="1"><stop offset="0" stop-color="#58b458"/><stop offset="1" stop-color="#1f7a26"/></linearGradient><linearGradient id="gs" x1="0" y1="0" x2="1" y2="0"><stop offset="0" stop-color="#2e3a30"/><stop offset="1" stop-color="#5a5f5c"/></linearGradient></defs><path d="M8 2.2L12.6 0.3l2.2 1v11.6l-6.8 2z" fill="url(#gs)"/><path d="M0.6 3.2l7.6-1.2v12.9l-7.6-0.7z" fill="url(#gb)" stroke="#1f6d25" stroke-width="0.7"/><path d="M2.3 4.6l3.6-0.5v6l-3.6 0.2z" fill="#d6f0d2" stroke="#7cc47a" stroke-width="0.5"/></svg>
<svg style="left:206.5px;top:41.5px" width="18" height="16.5" viewBox="0 0 18 16.5"><defs><linearGradient id="gp" x1="0" y1="0" x2="1" y2="0"><stop offset="0" stop-color="#fbfbfb"/><stop offset="1" stop-color="#d9dcdf"/></linearGradient></defs><path d="M1 9.4q0-1.2 1.2-1.5L8.5 6.5h6.8q1.6 0.2 1.7 1.8v5.2q-0.2 1.6-1.8 1.9L9 16q-1.4 0.1-2.6-0.4L2 14.4q-1-0.4-1-1.6z" fill="url(#gp)" stroke="#9ea3aa" stroke-width="0.8"/><path d="M1.4 9.2l6.4 2.1 8.8-2.4" stroke="#c3c7cc" stroke-width="0.8" fill="none"/><path d="M8.6 12.4l7.8-2v2.6l-7.8 2z" fill="#5d6166"/><path d="M9 14.2l7-1.8" stroke="#8a8f94" stroke-width="0.9"/><path d="M2.2 1.9L9 0.5l3.2 5.4L4.9 7.6z" fill="#e3f0f8" stroke="#a9b6c2" stroke-width="0.7"/><path d="M4.9 7.6l7.3-1.7 1 1.5-7.6 1.7z" fill="#c9d2da"/><circle cx="14.6" cy="9.2" r="0.6" fill="#6fc06f"/></svg>
<svg style="left:245.5px;top:42px" width="17" height="16" viewBox="0 0 17 16"><path d="M0.8 7L8 1.2 16.2 7v8.2H0.8z" fill="#dcdcf3" stroke="#a3a3d2" stroke-width="0.8"/><path d="M4.2 7.4Q4.4 1.4 10.4 0.8q3.6 0.4 4.4 3.4L12.6 8.6l-5 2z" fill="#3fa53f"/><path d="M6 5.6Q7.5 2.2 11 2.2" stroke="#8fd48a" stroke-width="1.2" fill="none" opacity="0.8"/><path d="M9.2 6.2q1.2-1.6 3-1.2" stroke="#e4f6e0" stroke-width="1" fill="none"/><path d="M0.8 7.2l7.4 4.6 8-4.6v8H0.8z" fill="#f3f3fc" stroke="#a9a9d6" stroke-width="0.7"/><path d="M0.8 15.2l6.4-5M16.2 15.2l-6.6-5" stroke="#b9b9df" stroke-width="0.8" fill="none"/></svg>
<svg style="left:438.3px;top:133px" width="11.6" height="11.8" viewBox="0 0 11.6 11.8"><rect x="0.2" y="0.2" width="8.5" height="5.8" rx="0.6" fill="#fbf3c4" stroke="#c9b868" stroke-width="0.4"/><rect x="0.2" y="0.2" width="8.5" height="2.2" fill="#3e6fc2"/><rect x="1" y="3.6" width="4" height="1" fill="#e8d27a"/><rect x="3.2" y="5.2" width="8.2" height="6.2" rx="0.6" fill="#f6b042" stroke="#d98a20" stroke-width="0.4"/><rect x="3.2" y="6.4" width="8.2" height="1.6" fill="#e0561f" opacity="0.75"/><rect x="4.2" y="9" width="3.6" height="1.3" fill="#fde79a"/></svg>
<svg style="left:438px;top:152.8px" width="12.2" height="12.2" viewBox="0 0 12.2 12.2"><path d="M3.4 1.2L8 0.3q0.8 0 1 0.8l0.6 2.8 2.2 1.3-1.6 2.2-1.4-0.4L7.6 11q-0.3 0.8-1.1 0.8L1.6 11.3q-1-0.3-0.8-1.2L2.4 2q0.2-0.7 1-0.8z" fill="#4f86cf"/><path d="M3.6 2l3.8-0.7 0.5 2.4-4.8 0.9z" fill="#dbe8f8"/><path d="M2.6 5.6l5-0.9-1.2 5.6-4.6-0.5z" fill="#a9c7ec"/><path d="M3 6.9l4.2-0.7M2.8 8.3l4.2-0.6M2.5 9.6l4-0.5" stroke="#3c6fb8" stroke-width="0.6"/><path d="M9.3 4.2l2.4 1.2-1.4 1.9z" fill="#1f4e9a"/></svg>
<svg style="left:753.3px;top:309.3px" width="12.4" height="11.6" viewBox="0 0 12.4 11.6"><defs><radialGradient id="gm" cx="0.38" cy="0.4" r="0.7"><stop offset="0" stop-color="#f6e08a"/><stop offset="0.55" stop-color="#d9ab2a"/><stop offset="1" stop-color="#a87c10"/></radialGradient></defs><path d="M3 0.6h3.6l-0.7 2.2h-2.2z" fill="#c79a1c"/><path d="M3.4 2.4h2.8" stroke="#8c6a10" stroke-width="0.9"/><ellipse cx="4.9" cy="6.9" rx="4.5" ry="4.2" fill="url(#gm)"/><ellipse cx="9.6" cy="9.6" rx="2.5" ry="1.5" fill="#b9b9b0" stroke="#7d7d74" stroke-width="0.5"/><ellipse cx="9.6" cy="8.8" rx="2.5" ry="1.4" fill="#dcdcd2" stroke="#8a8a80" stroke-width="0.5"/></svg>
<svg style="left:753.3px;top:322.90000000000003px" width="12.4" height="11.6" viewBox="0 0 12.4 11.6"><defs><radialGradient id="gm" cx="0.38" cy="0.4" r="0.7"><stop offset="0" stop-color="#f6e08a"/><stop offset="0.55" stop-color="#d9ab2a"/><stop offset="1" stop-color="#a87c10"/></radialGradient></defs><path d="M3 0.6h3.6l-0.7 2.2h-2.2z" fill="#c79a1c"/><path d="M3.4 2.4h2.8" stroke="#8c6a10" stroke-width="0.9"/><ellipse cx="4.9" cy="6.9" rx="4.5" ry="4.2" fill="url(#gm)"/><ellipse cx="9.6" cy="9.6" rx="2.5" ry="1.5" fill="#b9b9b0" stroke="#7d7d74" stroke-width="0.5"/><ellipse cx="9.6" cy="8.8" rx="2.5" ry="1.4" fill="#dcdcd2" stroke="#8a8a80" stroke-width="0.5"/></svg>
<svg style="left:753.3px;top:336.5px" width="12.4" height="11.6" viewBox="0 0 12.4 11.6"><defs><radialGradient id="gm" cx="0.38" cy="0.4" r="0.7"><stop offset="0" stop-color="#f6e08a"/><stop offset="0.55" stop-color="#d9ab2a"/><stop offset="1" stop-color="#a87c10"/></radialGradient></defs><path d="M3 0.6h3.6l-0.7 2.2h-2.2z" fill="#c79a1c"/><path d="M3.4 2.4h2.8" stroke="#8c6a10" stroke-width="0.9"/><ellipse cx="4.9" cy="6.9" rx="4.5" ry="4.2" fill="url(#gm)"/><ellipse cx="9.6" cy="9.6" rx="2.5" ry="1.5" fill="#b9b9b0" stroke="#7d7d74" stroke-width="0.5"/><ellipse cx="9.6" cy="8.8" rx="2.5" ry="1.4" fill="#dcdcd2" stroke="#8a8a80" stroke-width="0.5"/></svg>
<svg style="left:753.3px;top:350.1px" width="12.4" height="11.6" viewBox="0 0 12.4 11.6"><defs><radialGradient id="gm" cx="0.38" cy="0.4" r="0.7"><stop offset="0" stop-color="#f6e08a"/><stop offset="0.55" stop-color="#d9ab2a"/><stop offset="1" stop-color="#a87c10"/></radialGradient></defs><path d="M3 0.6h3.6l-0.7 2.2h-2.2z" fill="#c79a1c"/><path d="M3.4 2.4h2.8" stroke="#8c6a10" stroke-width="0.9"/><ellipse cx="4.9" cy="6.9" rx="4.5" ry="4.2" fill="url(#gm)"/><ellipse cx="9.6" cy="9.6" rx="2.5" ry="1.5" fill="#b9b9b0" stroke="#7d7d74" stroke-width="0.5"/><ellipse cx="9.6" cy="8.8" rx="2.5" ry="1.4" fill="#dcdcd2" stroke="#8a8a80" stroke-width="0.5"/></svg>
<svg style="left:774.6px;top:336.4px" width="12.65" height="11.83" viewBox="0 0 12.4 11.6"><defs><radialGradient id="gm" cx="0.38" cy="0.4" r="0.7"><stop offset="0" stop-color="#f6e08a"/><stop offset="0.55" stop-color="#d9ab2a"/><stop offset="1" stop-color="#a87c10"/></radialGradient></defs><path d="M3 0.6h3.6l-0.7 2.2h-2.2z" fill="#c79a1c"/><path d="M3.4 2.4h2.8" stroke="#8c6a10" stroke-width="0.9"/><ellipse cx="4.9" cy="6.9" rx="4.5" ry="4.2" fill="url(#gm)"/><ellipse cx="9.6" cy="9.6" rx="2.5" ry="1.5" fill="#b9b9b0" stroke="#7d7d74" stroke-width="0.5"/><ellipse cx="9.6" cy="8.8" rx="2.5" ry="1.4" fill="#dcdcd2" stroke="#8a8a80" stroke-width="0.5"/></svg>
<svg style="left:775.8px;top:298.6px" width="12.125" height="12.125" viewBox="0 0 12.5 12.5"><path d="M1.6 1.4h6.6l3 3v7.6h-9.6z" fill="#9ea4b2" opacity="0.85" transform="translate(0.9,0.9)"/><path d="M1 0.6h6.8l3 3v7.8H1z" fill="#fdfdfe" stroke="#9097a6" stroke-width="0.9"/><path d="M7.8 0.6v3h3" fill="#e3e6ee" stroke="#9097a6" stroke-width="0.8"/></svg>
<svg style="left:775.2px;top:318.2px" width="12" height="11.4" viewBox="0 0 13 12"><path d="M1.6 1.4L11.4 10.8M11.2 1.2L1.8 10.8" stroke="#b3122e" stroke-width="2.3" stroke-linecap="round" fill="none"/></svg>
<svg style="left:626.8px;top:405.8px" width="12" height="12.6" viewBox="0 0 12 12.6"><path d="M0.3 12.4q-0.3-5 3.4-5.6h3.6q3.9 0.6 3.6 5.6z" fill="#d2451f"/><path d="M2 12.4q0-3.4 2.4-4.6l1.6 1.2 1.4-1.2" fill="none" stroke="#f08a50" stroke-width="0.9"/><ellipse cx="5.7" cy="3.6" rx="2.9" ry="3.2" fill="#ecc06c"/><path d="M2.8 3Q3.4 0.2 6 0.3 8.6 0.6 8.6 3.2 7 1.6 2.8 3z" fill="#c98a2e"/></svg>
<svg style="left:711.5px;top:405.8px" width="12.6" height="12.6" viewBox="0 0 12.6 12.6"><path d="M0.3 12.4q-0.3-5 3.2-5.6h3.2q3.6 0.6 3.4 5.6z" fill="#b87848"/><ellipse cx="5.3" cy="3.6" rx="2.8" ry="3.2" fill="#ecc88a"/><path d="M2.5 3Q3 0.2 5.6 0.3 8.1 0.6 8.1 3.2 6.6 1.6 2.5 3z" fill="#c99a4e"/><circle cx="9.2" cy="9.4" r="3.3" fill="#1f74d8"/><path d="M9.2 7.6v0.9M9.2 9.3v2" stroke="#fff" stroke-width="1.1"/></svg>
</body></html>
